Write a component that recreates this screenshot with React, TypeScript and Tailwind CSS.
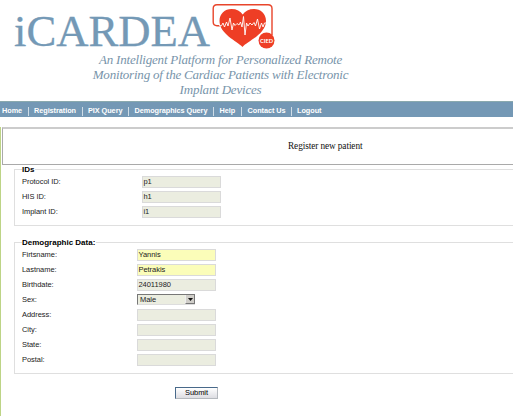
import React from "react";

const nav = [
  { label: "Home", cls: "w-[19.5px]" },
  { label: "Registration", cls: "w-[41.5px]" },
  { label: "PIX Query", cls: "w-[34px]" },
  { label: "Demographics Query", cls: "w-[72.5px]" },
  { label: "Help", cls: "w-[15.5px]" },
  { label: "Contact Us", cls: "w-[37px]" },
  { label: "Logout", cls: "w-[24px]" },
];

const ids = [
  { label: "Protocol ID:", value: "p1" },
  { label: "HIS ID:", value: "h1" },
  { label: "Implant ID:", value: "i1" },
];

const demographics = [
  { label: "Firtsname:", value: "Yannis", filled: true },
  { label: "Lastname:", value: "Petrakis", filled: true },
  { label: "Birthdate:", value: "24011980" },
  { label: "Sex:", value: "Male", select: true },
  { label: "Address:", value: "" },
  { label: "City:", value: "" },
  { label: "State:", value: "" },
  { label: "Postal:", value: "" },
];

function Field({ value, filled }: { value: string; filled?: boolean }) {
  return (
    <div
      className={`h-3 w-[79px] border border-[#dadada] pl-[0.5px] leading-[10px] whitespace-nowrap ${
        filled ? "bg-[#fbfdb9]" : "bg-[#ebede0]"
      }`}
    >
      {value}
    </div>
  );
}

function Select({ value }: { value: string }) {
  return (
    <div className="flex h-[11px] w-[58px] border-t border-b border-l border-[#777] border-b-[#ddd] bg-[#ebede0]">
      <span className="flex-1 pl-[2px] leading-[10px]">{value}</span>
      <span className="flex w-[10px] items-center justify-center border-r border-b border-l border-[#777] border-l-[#eee] bg-[#d0cec9]">
        <svg width="5" height="3" viewBox="0 0 5 3">
          <path d="M0 0h5L2.5 3z" fill="#111" />
        </svg>
      </span>
    </div>
  );
}

function HeartLogo() {
  return (
    <svg className="mt-[3px] ml-[2px] shrink-0" width="64" height="46" viewBox="0 0 64 46">
      <path
        d="M8 22.7H5Q1.200 22.700 1.200 19V5.500Q1.200 1.700 5 1.700H56Q60 1.700 60 5.500V32"
        fill="none"
        stroke="#e8452b"
        strokeWidth="1.4"
      />
      <path
        d="M30.500 44C25 38 7.500 31 7.500 18C7.500 10.500 13 6 19.500 6C24.500 6 28.500 8 30.700 11.500C33 8 37 6 42 6C48.500 6 54 10.500 54 18C54 31 36 38 30.500 44Z"
        fill="#ee3e25"
      />
      <path
        d="M7 22.700H9.500L11 20L12.500 24L14.500 19L16 23L18 15L20 27L21.500 20L23 22.500L25 20.500L27 22L28.500 19L30 24L31.500 13.500L33 32L34.500 20L36 23L38 20L40 22L42 19.500L43.500 23L45.500 16L47.500 26L49.500 20L51 24L52.500 20L54.500 20"
        fill="none"
        stroke="#fff"
        strokeWidth="0.9"
        strokeLinejoin="round"
      />
      <circle cx="54.500" cy="37.500" r="8" fill="#ee3e25" />
      <text
        x="48"
        y="39.900"
        textLength="13"
        lengthAdjust="spacingAndGlyphs"
        fill="#fff"
        fontSize="6.300"
        className="font-['Lato',sans-serif] font-bold tracking-normal"
      >
        CIED
      </text>
    </svg>
  );
}

export default function App() {
  return (
    <div className="h-[416px] w-full overflow-hidden bg-white font-['Liberation_Sans',Arial,sans-serif] text-[7.5px] tracking-[-0.05px] text-[#222]">
      <header className="h-[101px] font-['Liberation_Serif',serif] text-[#7499b6]">
        <div className="flex h-[52px]">
          <svg className="shrink-0 overflow-visible" width="210" height="52" viewBox="0 0 210 52">
            <text
              x="14"
              y="46"
              fontSize="45"
              textLength="196"
              lengthAdjust="spacingAndGlyphs"
              fill="#7499b6"
              stroke="#7499b6"
              strokeWidth="0.3"
              className="tracking-normal"
            >
              iCARDEA
            </text>
          </svg>
          <HeartLogo />
        </div>
        <div className="w-[441px] text-center text-[13px] leading-[15px] tracking-[-0.2px] italic whitespace-nowrap text-[#7894aa]">
          <div>An Intelligent Platform for Personalized Remote</div>
          <div>Monitoring of the Cardiac Patients with Electronic</div>
          <div>Implant Devices</div>
        </div>
      </header>

      <nav className="flex h-4 items-center border-t border-[#8aa9ae] bg-[#7498b5] pt-[3px] pl-[2px] text-[7.3px] font-bold tracking-[-0.05px] text-white">
        {nav.map((item, i) => (
          <React.Fragment key={item.label}>
            {i > 0 && <span className="mr-[5.5px] ml-[6px] h-[9px] w-px bg-[#cfdce6]" />}
            <a className={`leading-[10px] whitespace-nowrap ${item.cls}`}>{item.label}</a>
          </React.Fragment>
        ))}
      </nav>

      <main className="mt-[10px] h-[289px] border-l border-[#bdd486]">
        <div className="ml-px flex h-[38px] items-center border-t-2 border-b border-l border-[#aaa] border-t-[#ccc] pl-[285px] font-['Liberation_Serif',serif] text-[9.3px] tracking-[-0.1px] text-[#111]">
          Register new patient
        </div>

        <fieldset className="ml-[13px] h-[61px] border border-r-0 border-[#dfdfdf] pl-[7px]">
          <legend className="h-[9px] pr-px text-[8px] leading-[10px] font-bold tracking-normal text-black">IDs</legend>
          <div className="mt-[2px] flex flex-col gap-[3px]">
            {ids.map((row) => (
              <div key={row.label} className="flex h-3">
                <span className="w-[120px] leading-3">{row.label}</span>
                <Field value={row.value} />
              </div>
            ))}
          </div>
        </fieldset>

        <fieldset className="mt-3 ml-[13px] h-[136px] border border-r-0 border-[#dfdfdf] pl-[7px]">
          <legend className="h-[9px] pr-px text-[8px] leading-[10px] font-bold tracking-normal text-black">
            Demographic Data:
          </legend>
          <div className="mt-[2px] flex flex-col gap-[3px]">
            {demographics.map((row) => (
              <div key={row.label} className="flex h-3">
                <span className="w-[115px] leading-3">{row.label}</span>
                {row.select ? <Select value={row.value} /> : <Field value={row.value} filled={row.filled} />}
              </div>
            ))}
          </div>
        </fieldset>

        <button className="mt-[13px] ml-[174px] block h-3 w-[43px] border border-[#b5b9be] border-t-[#48698a] border-l-[#48698a] bg-linear-to-b from-white to-[#dddde2] text-center leading-[10px] text-black">
          Submit
        </button>
      </main>
    </div>
  );
}
